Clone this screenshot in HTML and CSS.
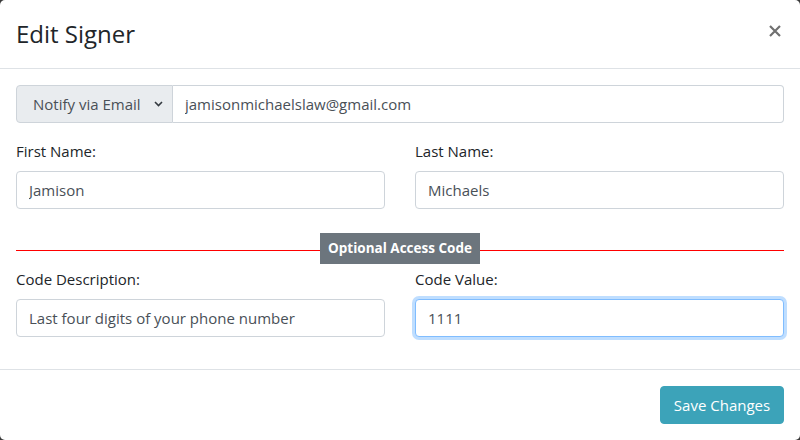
FILE: index.html
```html
<!DOCTYPE html>
<html>
<head>
<meta charset="utf-8">
<link rel="stylesheet" href="styles.css">
</head>
<body>
<div class="modal">
  <div class="modal-header">
    <h5 class="modal-title">Edit Signer</h5>
    <button class="close" type="button" aria-label="Close">
      <svg width="12" height="12" viewBox="0 0 12 12"><path d="M1 1 L11 11 M11 1 L1 11" stroke="#707070" stroke-width="2.2" stroke-linecap="butt"/></svg>
    </button>
  </div>
  <div class="modal-body">
    <div class="input-group form-group">
      <div class="select-wrap">
        <select class="custom-select">
          <option>Notify via Email</option>
        </select>
        <svg class="chevron" width="9" height="6" viewBox="0 0 9 6"><path d="M1 1 L4.5 4.5 L8 1" fill="none" stroke="#343a40" stroke-width="1.6"/></svg>
      </div>
      <input class="form-control grouped" type="text" value="jamisonmichaelslaw@gmail.com">
    </div>
    <div class="row">
      <div class="col form-group">
        <label>First Name:</label>
        <input class="form-control" type="text" value="Jamison">
      </div>
      <div class="col form-group">
        <label>Last Name:</label>
        <input class="form-control" type="text" value="Michaels">
      </div>
    </div>
    <div class="divider">
      <span class="badge">Optional Access Code</span>
    </div>
    <div class="row">
      <div class="col form-group">
        <label>Code Description:</label>
        <input class="form-control" type="text" value="Last four digits of your phone number">
      </div>
      <div class="col form-group">
        <label>Code Value:</label>
        <input class="form-control focused" type="text" value="1111">
      </div>
    </div>
  </div>
  <div class="modal-footer">
    <button class="btn btn-info" type="button">Save Changes</button>
  </div>
</div>
</body>
</html>
```

FILE: styles.css
```css
* { box-sizing: border-box; }
html, body { margin: 0; padding: 0; }
body {
  background: #3a3a3a;
  font-family: "Open Sans", "Noto Sans", sans-serif;
  font-size: 16px;
  line-height: 24px;
  color: #212529;
  width: 800px;
  height: 440px;
  overflow: hidden;
}
.modal {
  background: #fff;
  width: 800px;
  height: 440px;
  border-radius: 5px;
  display: flex;
  flex-direction: column;
}
.modal-header {
  display: flex;
  justify-content: space-between;
  align-items: flex-start;
  padding: 16px;
  border-bottom: 1px solid #dee2e6;
  height: 69px;
}
.modal-title {
  margin: 0;
  font-size: 24px;
  line-height: 36px;
  font-weight: 500;
  color: #212529;
}
.close {
  background: none;
  border: 0;
  padding: 0;
  margin: 9px 3px 0 0;
  width: 12px;
  height: 12px;
  display: block;
  cursor: pointer;
}
.close svg { display: block; }
.modal-body {
  padding: 16px;
}
.form-group { margin-bottom: 16px; }
.input-group {
  display: flex;
}
.select-wrap {
  position: relative;
  width: 157px;
  flex: none;
}
.custom-select {
  appearance: none;
  -webkit-appearance: none;
  width: 157px;
  height: 38px;
  padding: 6px 24px 6px 16px;
  font-family: inherit;
  font-size: 15px;
  color: #495057;
  background: #e9ecef;
  border: 1px solid #ced4da;
  border-radius: 4px 0 0 4px;
  display: block;
}
.chevron {
  position: absolute;
  right: 10px;
  top: 16px;
}
.form-control {
  display: block;
  width: 100%;
  height: 38px;
  padding: 6px 12px;
  font-family: inherit;
  font-size: 15px;
  line-height: 24px;
  color: #495057;
  background: #fff;
  border: 1px solid #ced4da;
  border-radius: 4px;
  outline: none;
}
.form-control.grouped {
  flex: 1;
  border-left: 0;
  border-radius: 0 4px 4px 0;
}
.form-control.focused {
  border-color: #80bdff;
  box-shadow: 0 0 0 3px rgba(0, 123, 255, 0.25);
}
.row {
  display: grid;
  grid-template-columns: 1fr 1fr;
  column-gap: 30px;
}
.col label {
  display: block;
  margin-bottom: 8px;
  font-size: 15px;
  line-height: 24px;
  color: #212529;
}
.divider {
  display: flex;
  justify-content: center;
  align-items: center;
  margin: 8px 0 3px;
  height: 31px;
  background-image: linear-gradient(#ff0000, #ff0000);
  background-repeat: no-repeat;
  background-size: 100% 1px;
  background-position: 0 17px;
}
.badge {
  background: #6c757d;
  color: #fff;
  font-weight: 700;
  font-size: 13.5px;
  line-height: 21px;
  padding: 5px 8px;
  white-space: nowrap;
}
.modal-footer {
  border-top: 1px solid #dee2e6;
  padding: 16px;
  display: flex;
  justify-content: flex-end;
  margin-top: auto;
}
.btn {
  font-family: inherit;
  font-size: 15px;
  line-height: 24px;
  padding: 6px 12px;
  border-radius: 4px;
  border: 1px solid transparent;
  cursor: pointer;
  height: 38px;
}
.btn-info {
  background: #3ca3b9;
  border-color: #3ca3b9;
  color: #fff;
  width: 124px;
}
```
